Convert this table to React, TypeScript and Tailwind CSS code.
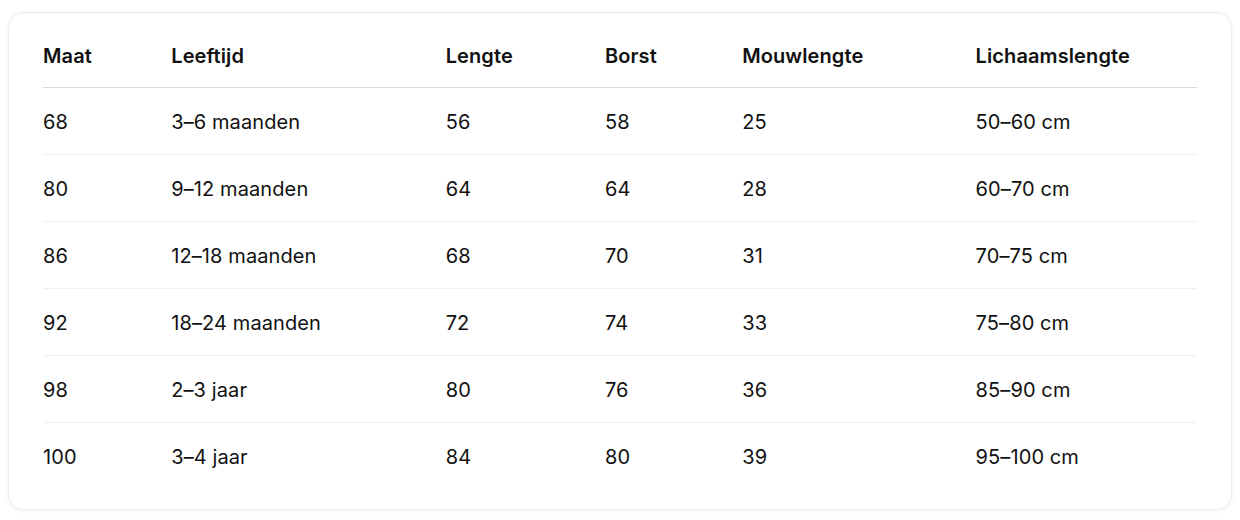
import React from 'react';

const headers = ['Maat', 'Leeftijd', 'Lengte', 'Borst', 'Mouwlengte', 'Lichaamslengte'];

const rows: string[][] = [
  ['68', '3–6 maanden', '56', '58', '25', '50–60 cm'],
  ['80', '9–12 maanden', '64', '64', '28', '60–70 cm'],
  ['86', '12–18 maanden', '68', '70', '31', '70–75 cm'],
  ['92', '18–24 maanden', '72', '74', '33', '75–80 cm'],
  ['98', '2–3 jaar', '80', '76', '36', '85–90 cm'],
  ['100', '3–4 jaar', '84', '80', '39', '95–100 cm'],
];

// column widths measured off the table (total 1152px)
const colWidths = ['w-[128px]', 'w-[274px]', 'w-[159px]', 'w-[137px]', 'w-[233px]', 'w-[221px]'];

export default function App() {
  return (
    <div className="min-h-screen bg-white px-2 pt-3 font-['Inter','Liberation_Sans',sans-serif] text-[#111]">
      <div className="rounded-2xl border border-[#ededed] bg-white px-[34px] pt-[30px] pb-5 shadow-[0_1px_4px_rgba(0,0,0,0.06)]">
        <table className="w-full table-fixed border-collapse text-left text-[20px] leading-[26px] tracking-[0.005em]">
          <colgroup>
            {colWidths.map((w, i) => (
              <col key={i} className={w} />
            ))}
          </colgroup>
          <thead>
            <tr className="border-b border-[#dadada]">
              {headers.map((h) => (
                <th key={h} className="pb-[18px] font-semibold">
                  {h}
                </th>
              ))}
            </tr>
          </thead>
          <tbody>
            {rows.map((r, i) => (
              <tr key={i} className={i < rows.length - 1 ? 'border-b border-[#efefef]' : ''}>
                {r.map((c, j) => (
                  <td key={j} className="pt-[21px] pb-[19px] font-normal">
                    {c}
                  </td>
                ))}
              </tr>
            ))}
          </tbody>
        </table>
      </div>
    </div>
  );
}
